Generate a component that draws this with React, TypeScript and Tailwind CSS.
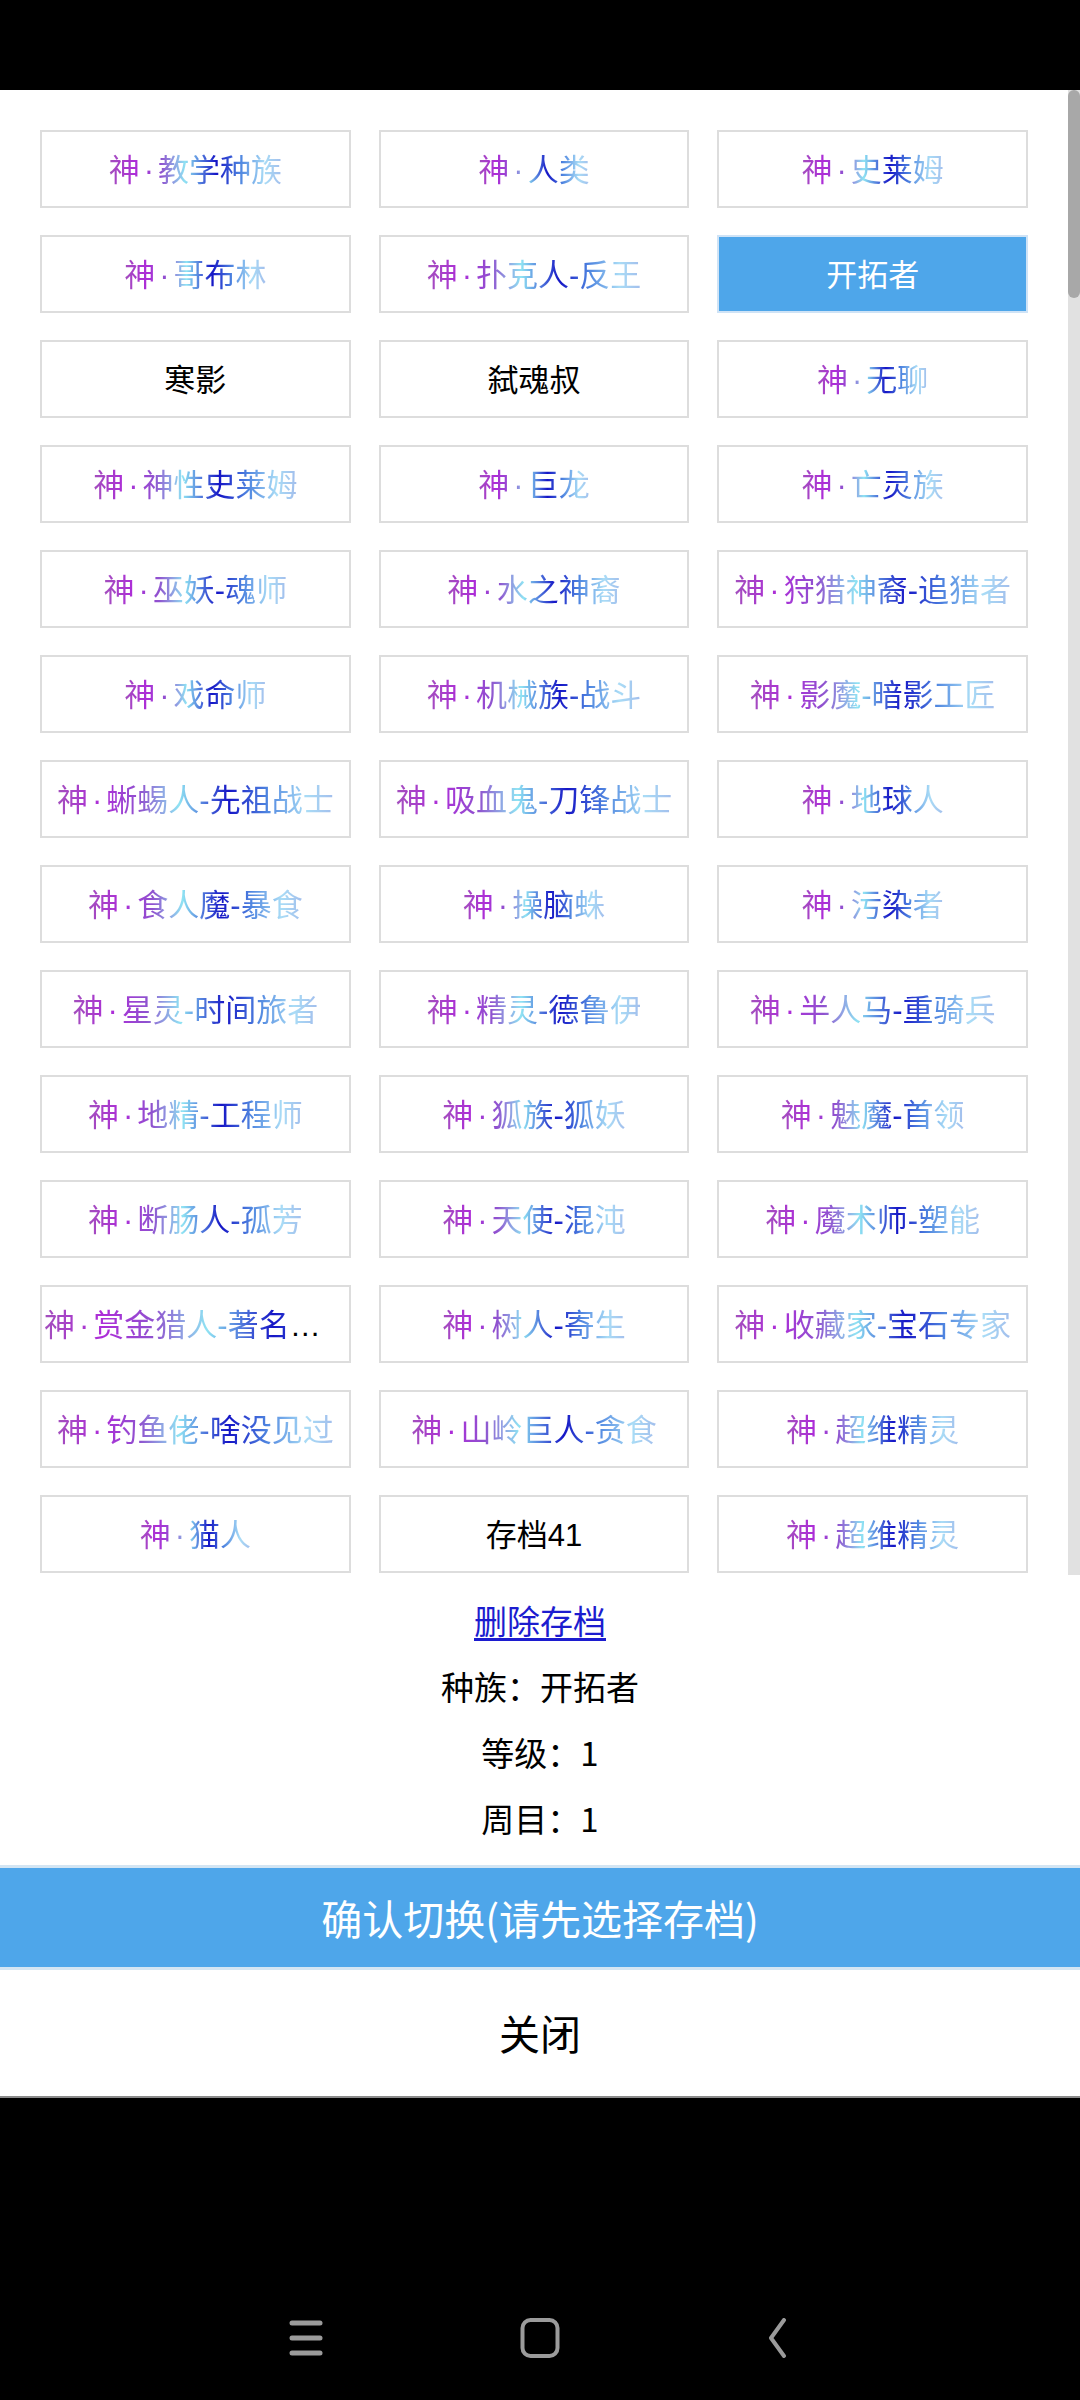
type Kind = "g" | "p" | "s";

const rows: [string, Kind][][] = [
  [["神·教学种族", "g"], ["神·人类", "g"], ["神·史莱姆", "g"]],
  [["神·哥布林", "g"], ["神·扑克人-反王", "g"], ["开拓者", "s"]],
  [["寒影", "p"], ["弑魂叔", "p"], ["神·无聊", "g"]],
  [["神·神性史莱姆", "g"], ["神·巨龙", "g"], ["神·亡灵族", "g"]],
  [["神·巫妖-魂师", "g"], ["神·水之神裔", "g"], ["神·狩猎神裔-追猎者", "g"]],
  [["神·戏命师", "g"], ["神·机械族-战斗", "g"], ["神·影魔-暗影工匠", "g"]],
  [["神·蜥蜴人-先祖战士", "g"], ["神·吸血鬼-刀锋战士", "g"], ["神·地球人", "g"]],
  [["神·食人魔-暴食", "g"], ["神·操脑蛛", "g"], ["神·污染者", "g"]],
  [["神·星灵-时间旅者", "g"], ["神·精灵-德鲁伊", "g"], ["神·半人马-重骑兵", "g"]],
  [["神·地精-工程师", "g"], ["神·狐族-狐妖", "g"], ["神·魅魔-首领", "g"]],
  [["神·断肠人-孤芳", "g"], ["神·天使-混沌", "g"], ["神·魔术师-塑能", "g"]],
  [["神·赏金猎人-著名赏金猎人", "g"], ["神·树人-寄生", "g"], ["神·收藏家-宝石专家", "g"]],
  [["神·钓鱼佬-啥没见过", "g"], ["神·山岭巨人-贪食", "g"], ["神·超维精灵", "g"]],
  [["神·猫人", "g"], ["存档41", "p"], ["神·超维精灵", "g"]],
];

const SaveSlot = ({ text, kind }: { text: string; kind: Kind }) => {
  const [head, tail] = text.split("·");
  return (
    <div
      className={`flex h-[78px] items-center justify-center overflow-hidden border-2 px-[2px] pt-[4px] ${
        kind === "s" ? "border-[#cfe3f6] bg-[#4ea6ea] text-white" : "border-[#dddddd] bg-white text-black"
      }`}
    >
      <div className="w-full overflow-hidden text-ellipsis whitespace-nowrap text-center font-['Liberation_Sans','Noto_Sans_CJK_SC',sans-serif] text-[31px] leading-[40px]">
        <span
          className={
            kind === "g"
              ? "bg-[linear-gradient(90deg,#a34fbd_0%,#ad2cd8_16%,#8f52cf_30%,#8fe3f3_44%,#1515c6_62%,#4f86e0_76%,#a9dcf6_90%,#a2bdec_100%)] bg-clip-text text-transparent"
              : ""
          }
        >
          {tail === undefined ? (
            text
          ) : (
            <>
              {head}
              <span className="mx-[4px]">·</span>
              {tail}
            </>
          )}
        </span>
      </div>
    </div>
  );
};

const NavBar = () => (
  <div className="flex h-[302px] items-start justify-center gap-[194px] bg-black pt-[220px]">
    <svg width="40" height="40" viewBox="0 0 40 40">
      <g stroke="#9b9b9b" strokeWidth="5" strokeLinecap="round">
        <line x1="6" y1="5" x2="34" y2="5" />
        <line x1="6" y1="20" x2="34" y2="20" />
        <line x1="6" y1="35" x2="34" y2="35" />
      </g>
    </svg>
    <svg width="40" height="40" viewBox="0 0 40 40">
      <rect x="2.5" y="2" width="35" height="36" rx="8" fill="none" stroke="#9b9b9b" strokeWidth="4" />
    </svg>
    <svg width="40" height="40" viewBox="0 0 40 40">
      <path d="M30 2 L17 20 L30 38" fill="none" stroke="#9b9b9b" strokeWidth="4" strokeLinecap="round" strokeLinejoin="round" />
    </svg>
  </div>
);

export default function App() {
  return (
    <div className="flex h-[2400px] w-[1080px] flex-col bg-black font-['Noto_Sans_CJK_SC',sans-serif]">
      <div className="h-[90px] shrink-0 bg-black" />

      <div className="flex flex-col bg-white">
        {/* save list + scrollbar */}
        <div className="flex h-[1485px]">
          <div className="flex-1 overflow-hidden px-[40px] pt-[40px]">
            <div className="grid grid-cols-3 gap-x-[28px] gap-y-[27px]">
              {rows.flat().map(([text, kind], i) => (
                <SaveSlot key={i} text={text} kind={kind} />
              ))}
            </div>
          </div>
          <div className="w-[12px] bg-[#e1e1e1]">
            <div className="h-[208px] rounded-full bg-[#a8a8a8]" />
          </div>
        </div>

        <div className="flex flex-col items-center pb-[14px] pt-[12px] text-[33px] leading-[66px] text-black">
          <a className="text-[#1c1ccf] underline underline-offset-[4px]">删除存档</a>
          <p>种族：开拓者</p>
          <p>等级：1</p>
          <p>周目：1</p>
        </div>

        <button className="flex h-[105px] items-center justify-center border-y-[3px] border-[#d3e5f3] bg-[#4ea6ea] text-[41px] text-white">
          确认切换(请先选择存档)
        </button>
        <button className="flex h-[128px] items-center justify-center border-b-2 border-[#8a8a8a] bg-white text-[41px] text-black">
          关闭
        </button>
      </div>

      <NavBar />
    </div>
  );
}
